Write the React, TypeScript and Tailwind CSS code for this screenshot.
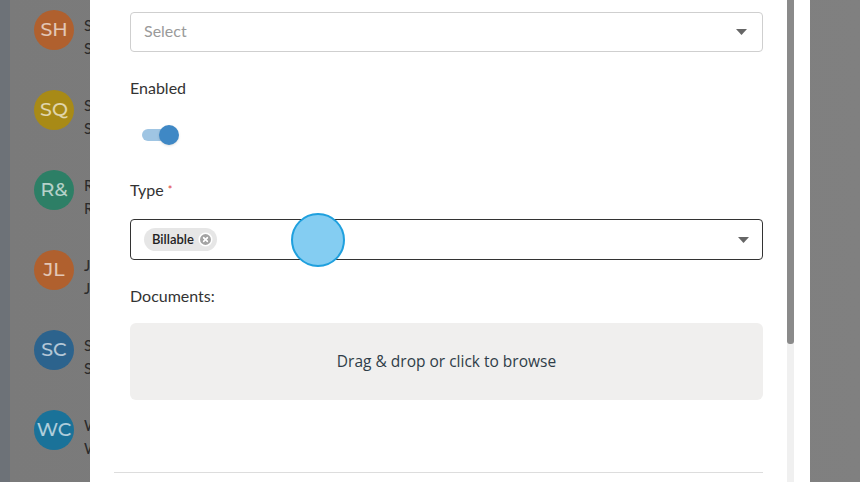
import { CircleX } from "lucide-react";

const people = [
  { initials: "SH", color: "bg-[#b0602e]", first: "S", second: "S" },
  { initials: "SQ", color: "bg-[#a88a16]", first: "S", second: "S" },
  { initials: "R&", color: "bg-[#2d7f66]", first: "R", second: "R" },
  { initials: "JL", color: "bg-[#b0602e]", first: "J", second: "J" },
  { initials: "SC", color: "bg-[#2c638d]", first: "S", second: "S" },
  { initials: "WC", color: "bg-[#1a7299]", first: "W", second: "W" },
];

function Caret() {
  return (
    <svg width="11" height="6" viewBox="0 0 11 6" className="shrink-0">
      <path d="M0 0 L11 0 L5.5 6 Z" fill="#666" />
    </svg>
  );
}

export default function App() {
  return (
    <div className="relative w-[860px] h-[482px] overflow-hidden flex bg-[#7b7b7b] font-['Lato',sans-serif]">
      {/* page behind the dialog, already dimmed */}
      <div className="w-[10px] h-full bg-[#6d7278]" />
      <div className="flex-1 h-full bg-gradient-to-r from-[#7a7a7a] to-[#808080]">
        <div className="flex flex-col pl-[24px] pt-[10px] gap-[40px]">
          {people.map((p) => (
            <div key={p.initials} className="flex items-start gap-[10px] h-[40px]">
              <div
                className={`w-[40px] h-[40px] shrink-0 rounded-full ${p.color} flex items-center justify-center text-[19px] font-medium text-white/65 font-['Montserrat','Lato',sans-serif]`}
              >
                {p.initials}
              </div>
              <div className="mt-[4px] flex flex-col text-[15px] leading-[23px] text-[#2a2a2a]">
                <span>{p.first}</span>
                <span>{p.second}</span>
              </div>
            </div>
          ))}
        </div>
      </div>

      {/* dialog */}
      <div className="absolute left-[90px] top-0 w-[720px] h-full bg-white flex">
        <div className="flex-1 flex flex-col pl-[40px] pr-[24px] pt-[12px]">
          <div className="h-[40px] border border-[#cfcfcf] rounded-[4px] flex items-center justify-between pl-[13px] pr-[15px]">
            <span className="text-[16px] text-[#9a9a9a] pb-[3px]">Select</span>
            <Caret />
          </div>

          <div className="mt-[26px] text-[16px] leading-[20px] text-[#333]">Enabled</div>
          <div className="mt-[27px] ml-[12px] relative w-[37px] h-[20px] flex items-center">
            <div className="w-[34px] h-[12px] rounded-full bg-[#9fc5e3]" />
            <div className="absolute right-0 top-0 w-[20px] h-[20px] rounded-full bg-[#3f88c5] shadow-sm" />
          </div>

          <div className="mt-[35px] text-[16px] leading-[20px] text-[#333]">
            Type <span className="text-[#e0413a] text-[11px] align-top">*</span>
          </div>
          <div className="relative mt-[19px] h-[41px] border border-[#333] rounded-[4px] flex items-center justify-between pl-[13px] pr-[13px]">
            <div className="h-[23px] rounded-full bg-[#e6e6e6] flex items-center gap-[4px] pl-[8px] pr-[4px]">
              <span className="text-[13px] font-semibold text-[#222]">Billable</span>
              <CircleX size={15} fill="#a3a3a3" color="#fff" strokeWidth={2.5} />
            </div>
            <Caret />
            {/* click highlight */}
            <div className="absolute left-[160px] top-[-7px] w-[54px] h-[54px] rounded-full bg-[#84cdf2] border-2 border-[#1fa0de]" />
          </div>

          <div className="mt-[26px] text-[16px] leading-[20px] text-[#333]">Documents:</div>
          <div className="mt-[17px] h-[77px] rounded-[6px] bg-[#f0efee] flex items-center justify-center">
            <span className="text-[15.5px] text-[#2f3d48] font-['Open_Sans',sans-serif]">
              Drag &amp; drop or click to browse
            </span>
          </div>

          <div className="mt-[72px] ml-[-16px] border-t border-[#dddddd]" />
        </div>

        {/* scrollbar */}
        <div className="w-[7px] h-full bg-[#f0f0f0] flex flex-col">
          <div className="h-[344px] bg-[#8a8a8a] rounded-b-[3px]" />
        </div>
        <div className="w-[16px]" />
      </div>
    </div>
  );
}
